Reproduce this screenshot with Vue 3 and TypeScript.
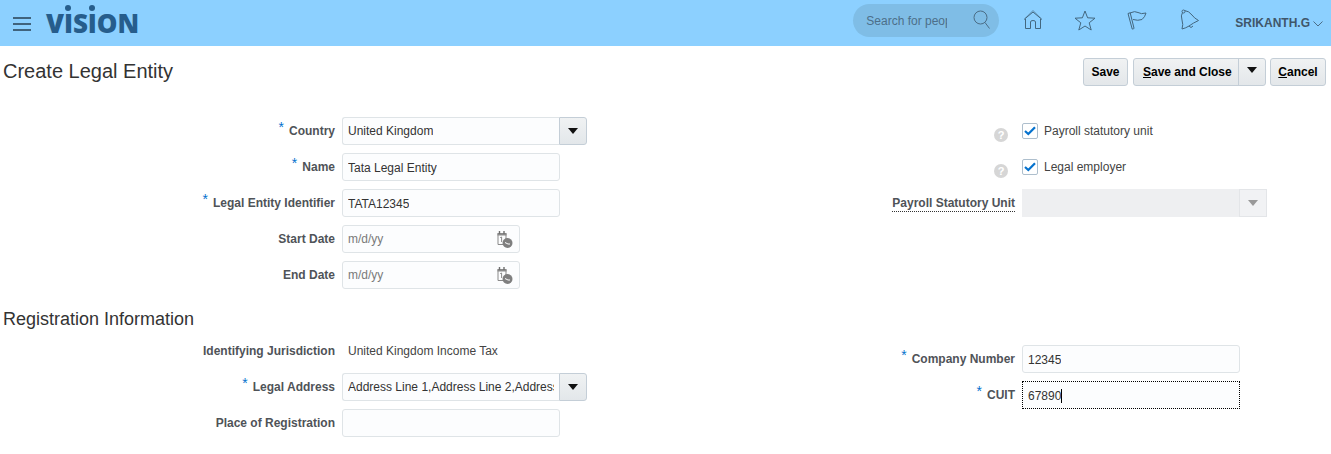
<script setup lang="ts">
interface Field {
  label: string;
  req?: boolean;
  kind: 'select' | 'text' | 'date' | 'static';
  value?: string;
}
const general: Field[] = [
  { label: 'Country', req: true, kind: 'select', value: 'United Kingdom' },
  { label: 'Name', req: true, kind: 'text', value: 'Tata Legal Entity' },
  { label: 'Legal Entity Identifier', req: true, kind: 'text', value: 'TATA12345' },
  { label: 'Start Date', kind: 'date', value: 'm/d/yy' },
  { label: 'End Date', kind: 'date', value: 'm/d/yy' },
];
const registration: Field[] = [
  { label: 'Identifying Jurisdiction', kind: 'static', value: 'United Kingdom Income Tax' },
  { label: 'Legal Address', req: true, kind: 'select', value: 'Address Line 1,Address Line 2,Address Line 3' },
  { label: 'Place of Registration', kind: 'text', value: '' },
];
const checks: string[] = ['Payroll statutory unit', 'Legal employer'];
</script>

<template>
  <div class="page">
    <header class="topbar">
      <button class="burger" aria-label="Menu"><i></i><i></i><i></i></button>
      <div class="logo">V<span class="dot">I</span>S<span class="dot">I</span>ON</div>
      <div class="spacer"></div>
      <div class="search">
        <span class="search-text">Search for people</span>
        <svg class="search-icon" width="18" height="20" viewBox="0 0 18 20" fill="none" stroke="#4b6d86" stroke-width="1">
          <circle cx="7.5" cy="7.5" r="6.5" />
          <path d="M12 12.5 L16.5 18.5" />
        </svg>
      </div>
      <svg class="nav home" width="20" height="20" viewBox="0 0 20 20" fill="none" stroke="#43677f" stroke-width="1">
        <path d="M1 9.5 L10 2 L19 9.5" />
        <path d="M2.5 8 L10 .5 L17.5 8" stroke-opacity=".6" />
        <path d="M2.5 9 V18.5 H7.5 V12 Q7.5 10.5 10 10.5 Q12.5 10.5 12.5 12 V18.5 H17.5 V9" />
      </svg>
      <svg class="nav star" width="22" height="21" viewBox="0 0 22 21" fill="none" stroke="#43677f" stroke-width="1">
        <path d="M11 1 L13.6 7.8 L21 8.2 L15.2 12.8 L17.2 20 L11 16 L4.8 20 L6.8 12.8 L1 8.2 L8.4 7.8 Z" />
      </svg>
      <svg class="nav flag" width="20" height="20" viewBox="0 0 20 20" fill="none" stroke="#43677f" stroke-width="1">
        <path d="M1 3.5 L3.2 2.8 L7 18.2 Q6.4 19.6 5.2 19 Z" />
        <path d="M3 3 Q8 .5 11 2.5 Q14 4.5 19 3 Q18 7 15 9.5 Q11 11 6 9.5" />
      </svg>
      <svg class="nav bell" width="20" height="22" viewBox="0 0 20 22" fill="none" stroke="#43677f" stroke-width="1">
        <circle cx="3.5" cy="2.5" r="1.5" />
        <path d="M4.5 1.5 Q9 2 12 6 Q14 9 18.5 11.5 Q13 14 9 17 Q6 19 2 20 Q3.5 15.5 2 11 Q.5 6.5 2.5 3.5" />
        <path d="M9 17 Q11 20 13 17" />
      </svg>
      <span class="user">SRIKANTH.G</span>
      <svg class="chev" width="10" height="6" viewBox="0 0 10 6" fill="none" stroke="#4b6d86" stroke-width="1"><path d="M.5 .5 L5 5 L9.5 .5" /></svg>
    </header>

    <main class="content">
      <div class="titlebar">
        <h1>Create Legal Entity</h1>
        <div class="actions">
          <button class="btn save"><span>Save</span></button>
          <div class="btn split">
            <span class="split-main"><u>S</u>ave and Close</span>
            <span class="split-arrow"><i class="tri"></i></span>
          </div>
          <button class="btn cancel"><span><u>C</u>ancel</span></button>
        </div>
      </div>

      <section class="columns">
        <div class="col">
          <div v-for="f in general" :key="f.label" class="row">
            <label class="lbl"><span v-if="f.req" class="req">*</span>{{ f.label }}</label>
            <div v-if="f.kind === 'select'" class="select">
              <div class="box grow"><span class="clip">{{ f.value }}</span></div>
              <div class="drop"><i class="tri"></i></div>
            </div>
            <div v-else-if="f.kind === 'date'" class="box date">
              <span class="hint">{{ f.value }}</span>
              <svg class="cal" width="17" height="17" viewBox="0 0 17 17">
                <path d="M2 2.5 H10 V13.5 H2 Z" fill="none" stroke="#8a8a8a" />
                <path d="M1.5 2 H10.5 V4.5 H1.5 Z" fill="#8a8a8a" />
                <path d="M3.5 0 V3 M8 0 V3" stroke="#6f6f6f" stroke-width="1.4" />
                <path d="M4.2 6.6 L5.6 6 V11" stroke="#8a8a8a" fill="none" />
                <circle cx="11.5" cy="12" r="5" fill="#7f7f7f" />
                <path d="M9 11.5 L12 13 H14" stroke="#fff" fill="none" />
              </svg>
            </div>
            <div v-else class="box wide"><span class="clip">{{ f.value }}</span></div>
          </div>
        </div>
        <div class="col">
          <div v-for="c in checks" :key="c" class="row">
            <div class="help-cell"><span class="help">?</span></div>
            <div class="check-field">
              <span class="checkbox">
                <svg width="12" height="10" viewBox="0 0 12 10" fill="none" stroke="#0572ce" stroke-width="2.2"><path d="M1 5 L4.3 8 L11 1.2" /></svg>
              </span>
              <span class="check-label">{{ c }}</span>
            </div>
          </div>
          <div class="row">
            <label class="lbl"><span class="dotted">Payroll Statutory Unit</span></label>
            <div class="disabled-select">
              <div class="grow"></div>
              <div class="disabled-drop"><i class="tri muted"></i></div>
            </div>
          </div>
        </div>
      </section>

      <h2>Registration Information</h2>

      <section class="columns">
        <div class="col">
          <div v-for="f in registration" :key="f.label" class="row">
            <label class="lbl"><span v-if="f.req" class="req">*</span>{{ f.label }}</label>
            <div v-if="f.kind === 'select'" class="select">
              <div class="box grow"><span class="clip">{{ f.value }}</span></div>
              <div class="drop"><i class="tri"></i></div>
            </div>
            <div v-else-if="f.kind === 'static'" class="static">{{ f.value }}</div>
            <div v-else class="box wide"></div>
          </div>
        </div>
        <div class="col offset">
          <div class="row">
            <label class="lbl"><span class="req">*</span>Company Number</label>
            <div class="box wide"><span class="clip">12345</span></div>
          </div>
          <div class="row">
            <label class="lbl"><span class="req">*</span>CUIT</label>
            <div class="box wide focused"><span class="typed">67890</span></div>
          </div>
        </div>
      </section>
    </main>
  </div>
</template>

<style>
html, body { margin: 0; background: #fff; }
</style>

<style scoped>
.page {
  width: 1331px;
  height: 454px;
  overflow: hidden;
  font-family: "Liberation Sans", Arial, sans-serif;
  font-size: 12px;
  color: #333;
}
.topbar {
  height: 46px;
  background: #8cd0ff;
  display: flex;
  align-items: center;
  padding-left: 13px;
  box-sizing: border-box;
}
.burger {
  width: 18px;
  height: 14px;
  padding: 0;
  border: 0;
  background: none;
  display: flex;
  flex-direction: column;
  justify-content: space-between;
  margin-top: 2px;
}
.burger i { display: block; height: 2px; background: #40637d; }
.logo {
  margin-left: 15px;
  font-family: "Open Sans", sans-serif;
  font-weight: 800;
  font-size: 26px;
  line-height: 46px;
  color: #265d8c;
  letter-spacing: -0.1px;
}
.dot { position: relative; display: inline-block; }
.dot::before {
  content: "";
  position: absolute;
  width: 6px;
  height: 6px;
  border-radius: 50%;
  background: #265d8c;
  left: 50%;
  margin-left: -3px;
  top: 5px;
}
.spacer { flex: 1; }
.search {
  width: 146px;
  height: 33px;
  margin-top: -5px;
  border-radius: 17px;
  background: #7fbde6;
  display: flex;
  align-items: center;
  box-sizing: border-box;
  padding-left: 13px;
}
.search-text {
  width: 81px;
  overflow: hidden;
  white-space: nowrap;
  color: #4d6f89;
}
.search-icon { margin-left: 26px; margin-top: -2px; }
.nav { flex: none; }
.home { margin-left: 24px; margin-top: -6px; }
.star { margin-left: 31px; margin-top: -6px; }
.flag { margin-left: 31px; margin-top: -6px; }
.bell { margin-left: 33px; margin-top: -6px; }
.user {
  margin-left: 35px;
  font-weight: 700;
  color: #40566a;
  white-space: nowrap;
}
.chev { margin-left: 3px; margin-right: 8px; margin-top: 2px; }

.titlebar {
  display: flex;
  justify-content: space-between;
  align-items: flex-start;
  padding: 12px 5px 0 3px;
  height: 59px;
}
h1 {
  margin: 0;
  font-size: 20px;
  font-weight: 400;
  line-height: 26px;
  color: #333;
}
.actions { display: flex; gap: 5px; }
.actions .btn:last-child { margin-left: -1px; }
.btn {
  height: 28px;
  box-sizing: border-box;
  border: 1px solid #c4ced7;
  border-radius: 3px;
  background: linear-gradient(#f0f2f3, #e3e7ea);
  font: 700 12px "Liberation Sans", Arial, sans-serif;
  color: #000;
  padding: 0;
  display: flex;
  align-items: center;
  justify-content: center;
}
.save { width: 45px; }
.cancel { width: 56px; }
.split { width: 133px; }
.split-main { width: 104px; padding-left: 9px; box-sizing: border-box; white-space: nowrap; }
.split-arrow {
  flex: 1;
  height: 100%;
  border-left: 1px solid #c4ced7;
  display: flex;
  justify-content: center;
  padding-top: 8px;
  box-sizing: border-box;
}
.tri {
  display: block;
  width: 0;
  height: 0;
  border-left: 5px solid transparent;
  border-right: 5px solid transparent;
  border-top: 6px solid #111;
}
.tri.muted { border-top-color: #999; }

.columns { display: grid; grid-template-columns: 680px 1fr; }
.col { display: flex; flex-direction: column; gap: 8px; }
.offset { padding-top: 8px; }
.row {
  display: grid;
  grid-template-columns: 335px 1fr;
  column-gap: 7px;
  align-items: center;
  height: 28px;
}
.lbl {
  text-align: right;
  font-weight: 700;
  color: #4f5358;
  white-space: nowrap;
}
.req {
  color: #0572ce;
  font-weight: 400;
  font-size: 14px;
  line-height: 0;
  margin-right: 5px;
  position: relative;
  top: -3px;
}
.dotted { border-bottom: 1px dotted #333; padding-bottom: 1px; }
.box {
  height: 28px;
  box-sizing: border-box;
  border: 1px solid #dfe4e7;
  border-radius: 3px;
  background: #fcfdfe;
  display: flex;
  align-items: center;
  padding: 0 5px;
}
.wide { width: 218px; padding-top: 2px; }
.clip { overflow: hidden; white-space: nowrap; }
.select { display: flex; width: 245px; height: 28px; }
.grow { flex: 1; min-width: 0; }
.select .box { border-radius: 3px 0 0 3px; border-right: 0; }
.drop {
  width: 28px;
  height: 28px;
  box-sizing: border-box;
  border: 1px solid #c4ced7;
  border-radius: 0 3px 3px 0;
  background: linear-gradient(#f0f2f3, #e3e7ea);
  display: flex;
  align-items: center;
  justify-content: center;
}
.date { width: 178px; justify-content: space-between; padding-right: 6px; }
.hint { color: #7a7a7a; }
.cal { flex: none; }
.static { padding-left: 6px; color: #444; }
.help-cell { display: flex; justify-content: flex-end; padding-right: 7px; padding-top: 7px; box-sizing: border-box; }
.help {
  width: 14px;
  height: 14px;
  border-radius: 50%;
  background: #d6d6d6;
  color: #fff;
  font-weight: 700;
  font-size: 11px;
  line-height: 14px;
  text-align: center;
}
.check-field { display: flex; align-items: center; gap: 6px; }
.checkbox {
  width: 16px;
  height: 16px;
  box-sizing: border-box;
  border: 1px solid #aebfcd;
  border-radius: 2px;
  background: #fff;
  display: flex;
  align-items: center;
  justify-content: center;
}
.check-label { color: #444; }
.disabled-select {
  display: flex;
  width: 245px;
  height: 28px;
  background: #eeeff1;
}
.disabled-drop {
  width: 28px;
  box-sizing: border-box;
  border: 1px solid #e3e5e8;
  background: #f1f2f4;
  display: flex;
  align-items: center;
  justify-content: center;
}
h2 {
  margin: 17px 0 5px 3px;
  height: 26px;
  font-size: 18px;
  font-weight: 400;
  line-height: 26px;
  color: #333;
}
.focused { border: 1px dotted #000; border-radius: 0; }
.typed { border-right: 1px solid #000; line-height: 14px; }
</style>
